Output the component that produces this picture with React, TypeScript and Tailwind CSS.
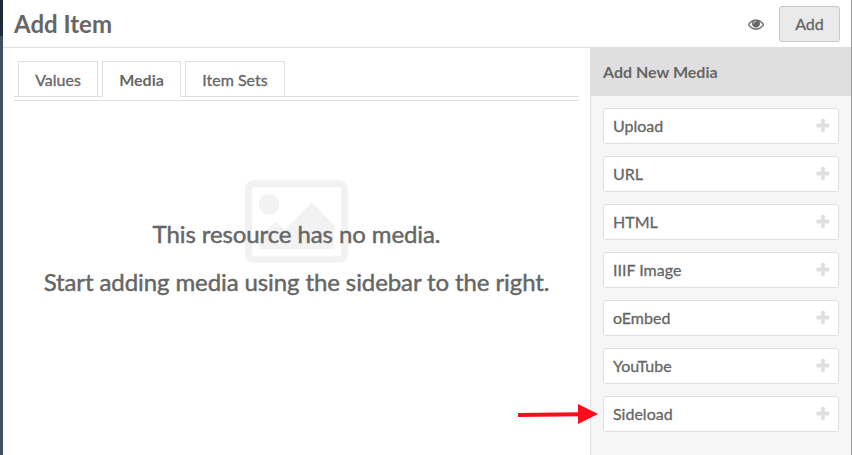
const mediaTypes = ['Upload', 'URL', 'HTML', 'IIIF Image', 'oEmbed', 'YouTube', 'Sideload'];

function EyeIcon() {
  return (
    <svg className="size-4" viewBox="0 0 1792 1792" fill="currentColor" stroke="currentColor" strokeWidth="20">
      <path d="M1664 960q-152-236-381-353 61 104 61 225 0 185-131.5 316.5t-316.5 131.5-316.5-131.5-131.5-316.5q0-121 61-225-229 117-381 353 133 205 333.5 326.5t434.5 121.5 434.5-121.5 333.5-326.5zm-720-384q0-20-14-34t-34-14q-125 0-214.5 89.5t-89.5 214.5q0 20 14 34t34 14 34-14 14-34q0-86 61-147t147-61q20 0 34-14t14-34zm848 384q0 34-20 69-140 230-376.5 368.5t-499.5 138.5-499.5-139-376.5-368q-20-35-20-69t20-69q140-229 376.5-368t499.5-139 499.5 139 376.5 368q20 35 20 69z" />
    </svg>
  );
}

function PlusIcon() {
  return (
    <svg className="size-4 text-[#dfdfdf]" viewBox="0 0 1792 1792" fill="currentColor" stroke="currentColor" strokeWidth="50">
      <path d="M1600 736v192q0 40-28 68t-68 28h-416v416q0 40-28 68t-68 28h-192q-40 0-68-28t-28-68v-416h-416q-40 0-68-28t-28-68v-192q0-40 28-68t68-28h416v-416q0-40 28-68t68-28h192q40 0 68 28t28 68v416h416q40 0 68 28t28 68z" />
    </svg>
  );
}

function PictureIcon() {
  return (
    <svg className="absolute left-[231px] top-[79px] h-[83px] w-[103px] text-[#f2f2f2]" viewBox="-64 128 1920 1536" fill="currentColor">
      <path d="M576 576q0 80-56 136t-136 56-136-56-56-136 56-136 136-56 136 56 56 136zm1024 384v448h-1408v-192l320-320 160 160 512-512zm96-704h-1600q-13 0-22.5 9.5t-9.5 22.5v1216q0 13 9.5 22.5t22.5 9.5h1600q13 0 22.5-9.5t9.5-22.5v-1216q0-13-9.5-22.5t-22.5-9.5zm160 32v1216q0 66-47 113t-113 47h-1600q-66 0-113-47t-47-113v-1216q0-66 47-113t113-47h1600q66 0 113 47t47 113z" />
    </svg>
  );
}

export default function App() {
  return (
    <div className="relative flex h-[455px] w-[852px] overflow-hidden bg-white font-['Lato',sans-serif] text-base text-[#666] [-webkit-text-stroke:0.3px_#666]">
      <div className="w-[3px] shrink-0 bg-[#404e66]">
        <div className="h-9 bg-[#202a38]" />
      </div>
      <div className="flex min-w-0 flex-1 flex-col border-r border-[#999]">
        <header className="flex h-12 shrink-0 items-center border-b border-[#dfdfdf] px-[11px]">
          <h1 className="flex-1 text-2xl font-bold [-webkit-text-stroke:0]">Add Item</h1>
          <EyeIcon />
          <button className="ml-[15px] h-9 w-[61px] rounded-[3px] border border-[#c8c8c8] bg-[#eaeaea]">Add</button>
        </header>
        <div className="flex min-h-0 flex-1">
          <main className="flex-1 px-[11px] pt-[13px]">
            <nav className="h-10 border-b border-[#dfdfdf]">
              <div className="flex h-9 gap-1 border-b border-[#dfdfdf] pl-1 text-center leading-[36px]">
                <div className="h-[35px] w-20 border border-b-0 border-[#dfdfdf]">Values</div>
                <div className="h-9 w-[79px] border border-b-0 border-[#dfdfdf] bg-white font-bold [-webkit-text-stroke:0]">Media</div>
                <div className="h-[35px] w-[100px] border border-b-0 border-[#dfdfdf]">Item Sets</div>
              </div>
            </nav>
            <section className="relative pt-[109px] text-center text-2xl leading-[48px] tracking-[-0.1px] [-webkit-text-stroke:0.45px_#666]">
              <PictureIcon />
              <p className="relative whitespace-nowrap">This resource has no media.</p>
              <p className="relative whitespace-nowrap">Start adding media using the sidebar to the right.</p>
            </section>
          </main>
          <aside className="w-[261px] shrink-0 border-l border-[#dfdfdf] bg-[#f6f6f6]">
            <h2 className="h-12 bg-[#dfdfdf] pl-3 font-bold leading-[48px] [-webkit-text-stroke:0]">Add New Media</h2>
            <div className="flex flex-col gap-3 px-3 pt-3">
              {mediaTypes.map((type) => (
                <button key={type} className="flex h-9 items-center justify-between rounded-[3px] border border-[#dfdfdf] bg-white pl-[9px] pr-[7px]">
                  <span>{type}</span>
                  <PlusIcon />
                </button>
              ))}
            </div>
          </aside>
        </div>
      </div>
      <svg className="absolute left-[516px] top-[402px] h-6 w-[84px]" viewBox="0 0 84 24">
        <path d="M2 13 L64 12.2" stroke="#fb0d1b" strokeWidth="4" />
        <path d="M62 2 L82 12 L62 22 Z" fill="#fb0d1b" />
      </svg>
    </div>
  );
}
